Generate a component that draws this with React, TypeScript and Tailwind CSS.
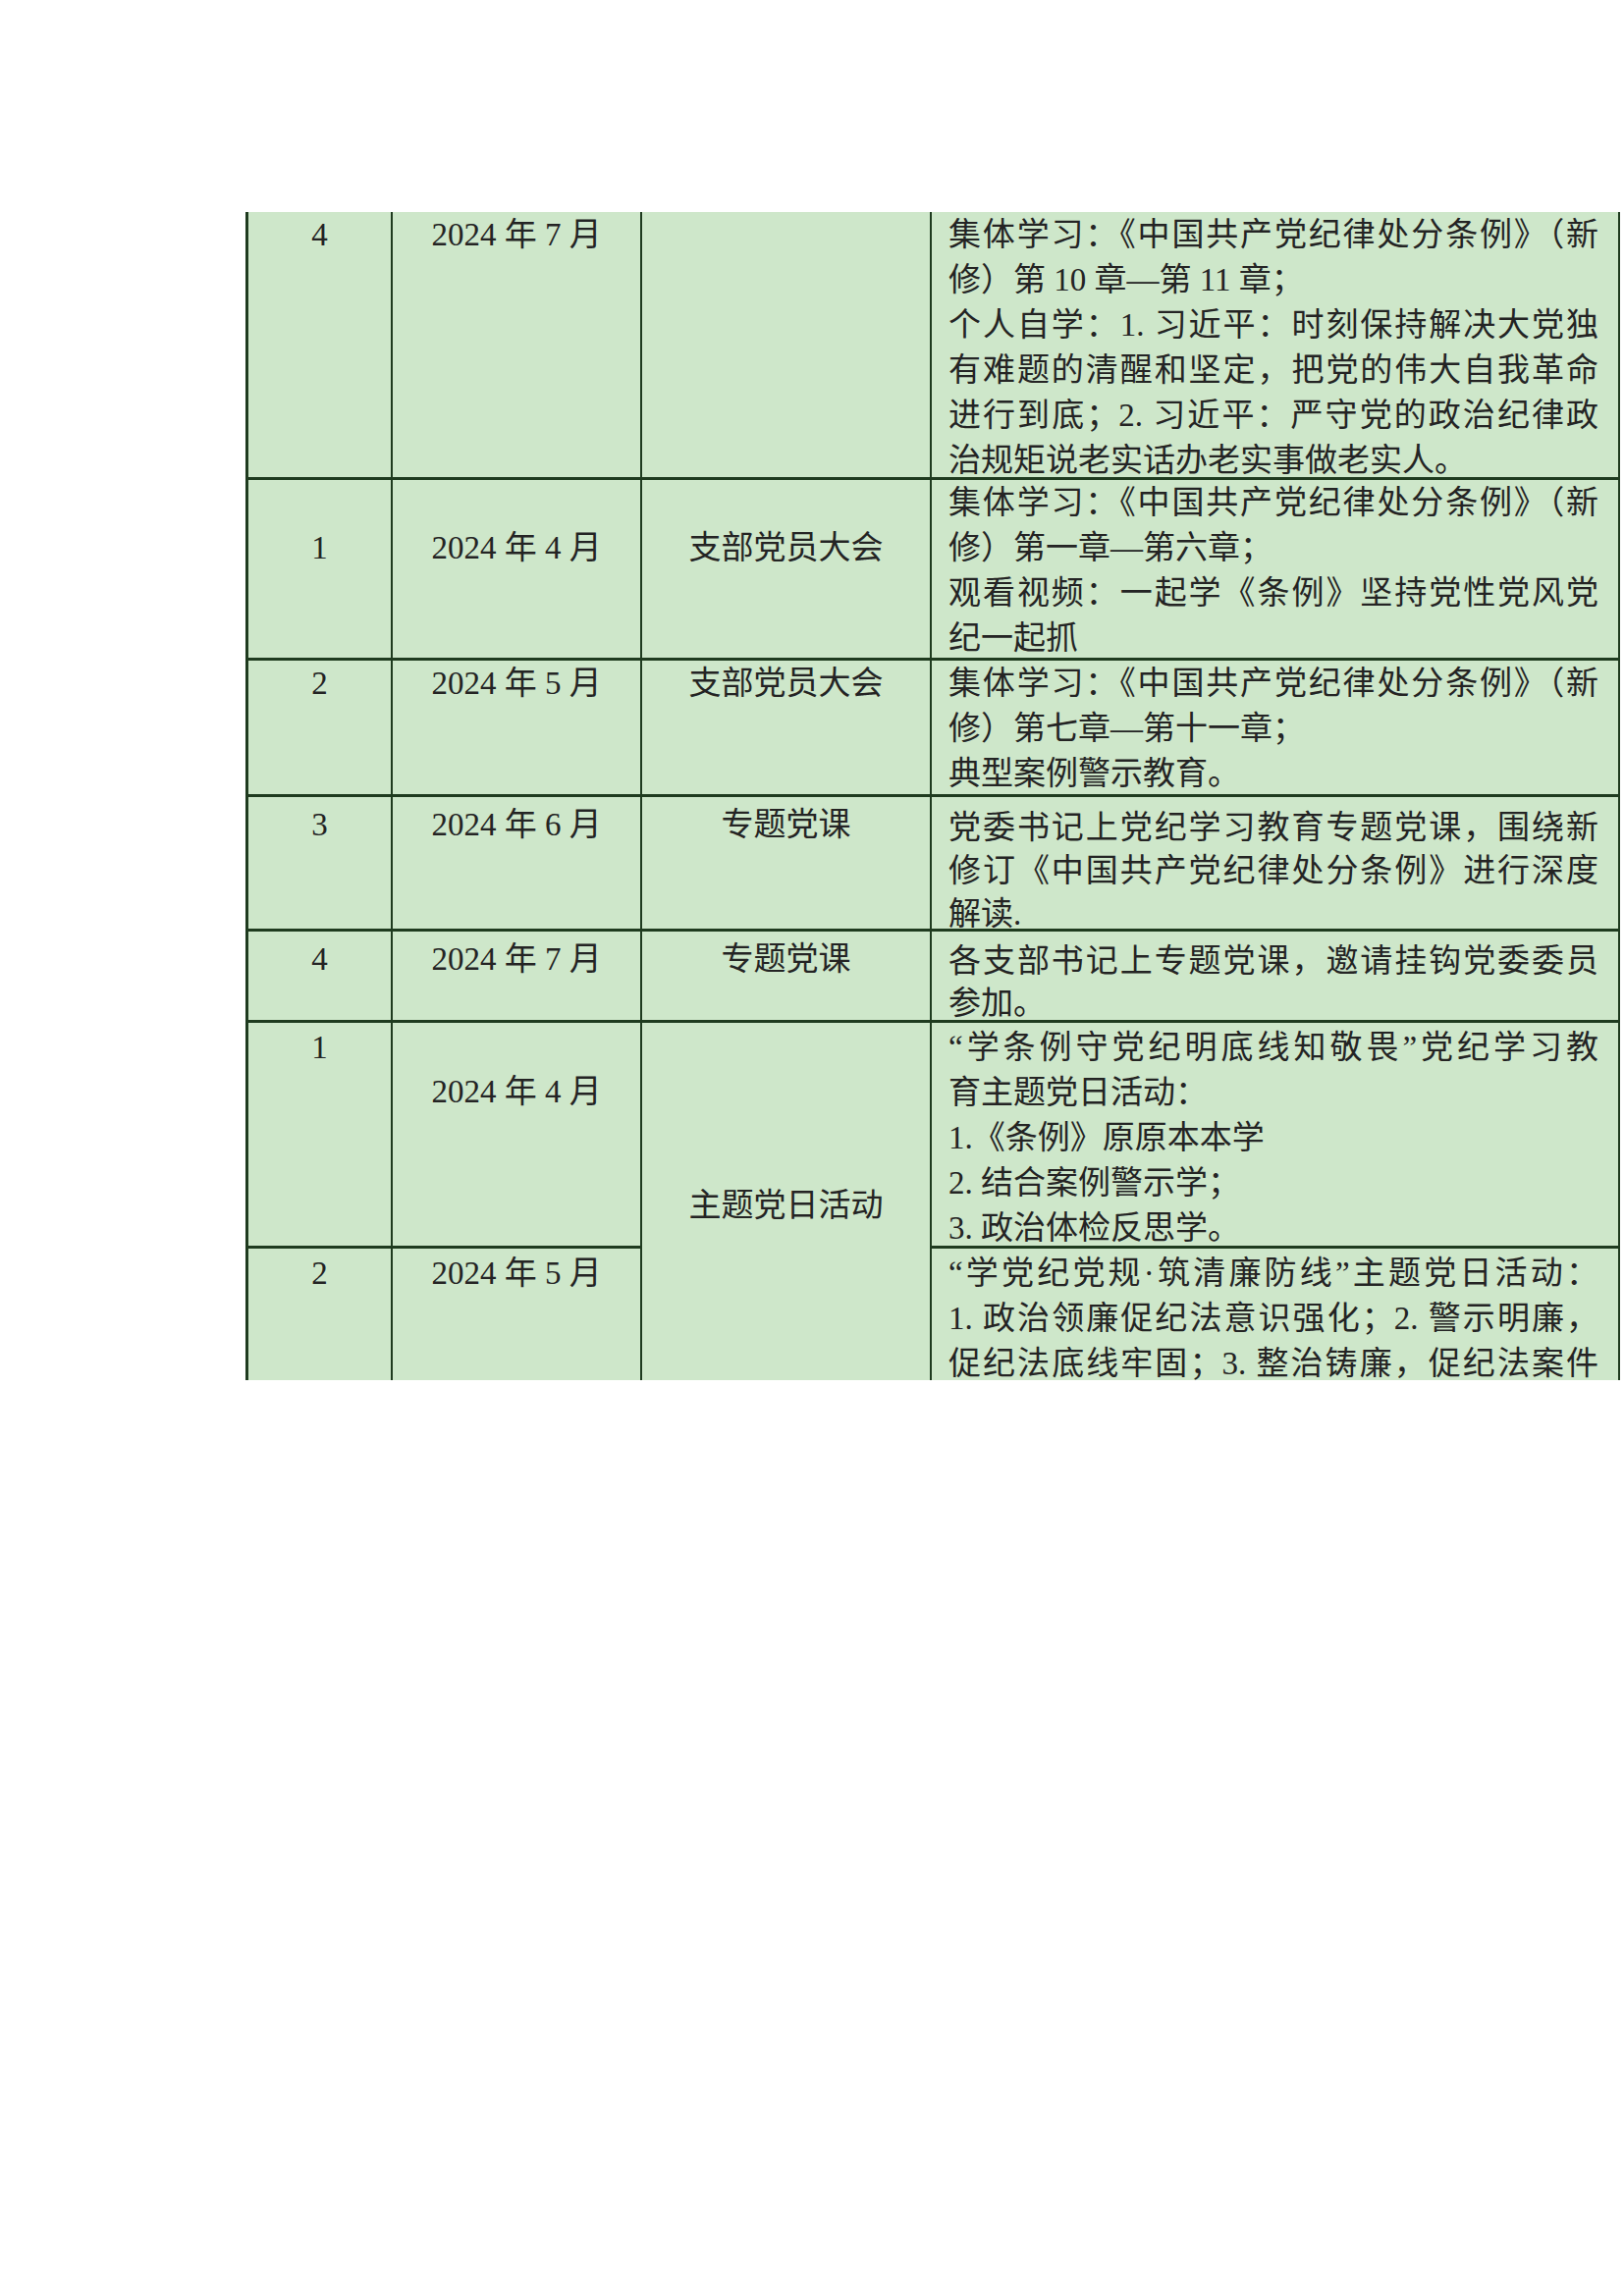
import React from 'react'

type Row = {
  no: string
  noPad: string
  date: string
  datePad: string
  kind?: string
  kindPad?: string
  kindSpan?: boolean
  lines: { text: string; full?: boolean }[]
  linesPad: string
  leading?: string
  last?: boolean
}

const font = { fontFamily: '"Liberation Serif", "Noto Sans CJK SC", serif' }

// row heights follow the picture: 273 / 184 / 139 / 137 / 93 / 230 / 134
const rows: Row[] = [
  {
    no: '4',
    noPad: 'pt-0',
    date: '2024 年 7 月',
    datePad: 'pt-0',
    kind: '',
    kindPad: 'pt-0',
    linesPad: 'pt-0',
    lines: [
      { text: '集体学习：《中国共产党纪律处分条例》（新', full: true },
      { text: '修）第 10 章—第 11 章；' },
      { text: '个人自学：1. 习近平：时刻保持解决大党独', full: true },
      { text: '有难题的清醒和坚定，把党的伟大自我革命', full: true },
      { text: '进行到底；2. 习近平：严守党的政治纪律政', full: true },
      { text: '治规矩说老实话办老实事做老实人。' },
    ],
  },
  {
    no: '1',
    noPad: 'pt-[46px]',
    date: '2024 年 4 月',
    datePad: 'pt-[46px]',
    kind: '支部党员大会',
    kindPad: 'pt-[46px]',
    linesPad: 'pt-0',
    lines: [
      { text: '集体学习：《中国共产党纪律处分条例》（新', full: true },
      { text: '修）第一章—第六章；' },
      { text: '观看视频：一起学《条例》坚持党性党风党', full: true },
      { text: '纪一起抓' },
    ],
  },
  {
    no: '2',
    noPad: 'pt-0',
    date: '2024 年 5 月',
    datePad: 'pt-0',
    kind: '支部党员大会',
    kindPad: 'pt-0',
    linesPad: 'pt-0',
    lines: [
      { text: '集体学习：《中国共产党纪律处分条例》（新', full: true },
      { text: '修）第七章—第十一章；' },
      { text: '典型案例警示教育。' },
    ],
  },
  {
    no: '3',
    noPad: 'pt-[5px]',
    date: '2024 年 6 月',
    datePad: 'pt-[5px]',
    kind: '专题党课',
    kindPad: 'pt-[5px]',
    linesPad: 'pt-[9px]',
    leading: 'leading-[44px]',
    lines: [
      { text: '党委书记上党纪学习教育专题党课，围绕新', full: true },
      { text: '修订《中国共产党纪律处分条例》进行深度', full: true },
      { text: '解读.' },
    ],
  },
  {
    no: '4',
    noPad: 'pt-[5px]',
    date: '2024 年 7 月',
    datePad: 'pt-[5px]',
    kind: '专题党课',
    kindPad: 'pt-[5px]',
    linesPad: 'pt-[9px]',
    leading: 'leading-[43px]',
    lines: [
      { text: '各支部书记上专题党课，邀请挂钩党委委员', full: true },
      { text: '参加。' },
    ],
  },
  {
    no: '1',
    noPad: 'pt-[2px]',
    date: '2024 年 4 月',
    datePad: 'pt-[47px]',
    kind: '主题党日活动',
    kindPad: 'pt-[163px]',
    kindSpan: true,
    linesPad: 'pt-[2px]',
    lines: [
      { text: '“学条例守党纪明底线知敬畏”党纪学习教', full: true },
      { text: '育主题党日活动：' },
      { text: '1.《条例》原原本本学' },
      { text: '2. 结合案例警示学；' },
      { text: '3. 政治体检反思学。' },
    ],
  },
  {
    no: '2',
    noPad: 'pt-[2px]',
    date: '2024 年 5 月',
    datePad: 'pt-[2px]',
    linesPad: 'pt-[2px]',
    last: true,
    lines: [
      { text: '“学党纪党规·筑清廉防线”主题党日活动：', full: true },
      { text: '1. 政治领廉促纪法意识强化；2. 警示明廉，', full: true },
      { text: '促纪法底线牢固；3. 整治铸廉，促纪法案件', full: true },
    ],
  },
]

export default function App() {
  return (
    <div className="w-[1654px] h-[2339px] bg-white overflow-hidden pt-[216px]" style={font}>
      <div className="ml-[250px] w-[1400px] border-l-[3px] border-[#1f3b1f] bg-[#cee7ca] text-[#242424] text-[33px] leading-[46px] grid grid-cols-[147px_254px_295px_701px] grid-rows-[273px_184px_139px_137px_93px_230px_134px]">
        {rows.map((r, i) => {
          const b = r.last ? 'border-r-2 border-[#1f3b1f]' : 'border-r-2 border-b-[3px] border-[#1f3b1f]'
          return (
            <React.Fragment key={i}>
              <div className={`${b} ${r.noPad} text-center`}>{r.no}</div>
              <div className={`${b} ${r.datePad} text-center whitespace-nowrap`}>{r.date}</div>
              {r.kind !== undefined && (
                <div
                  className={`${r.kindSpan ? 'row-span-2 border-r-2 border-[#1f3b1f]' : b} ${r.kindPad} text-center whitespace-nowrap`}
                >
                  {r.kind}
                </div>
              )}
              <div className={`${b} ${r.linesPad} ${r.leading ?? ''} pl-[17px] pr-[20px] overflow-visible`}>
                {r.lines.map((l, j) => (
                  <div
                    key={j}
                    className={l.full ? 'whitespace-nowrap text-justify [text-align-last:justify]' : 'whitespace-nowrap'}
                  >
                    {l.text}
                  </div>
                ))}
              </div>
            </React.Fragment>
          )
        })}
      </div>
    </div>
  )
}
